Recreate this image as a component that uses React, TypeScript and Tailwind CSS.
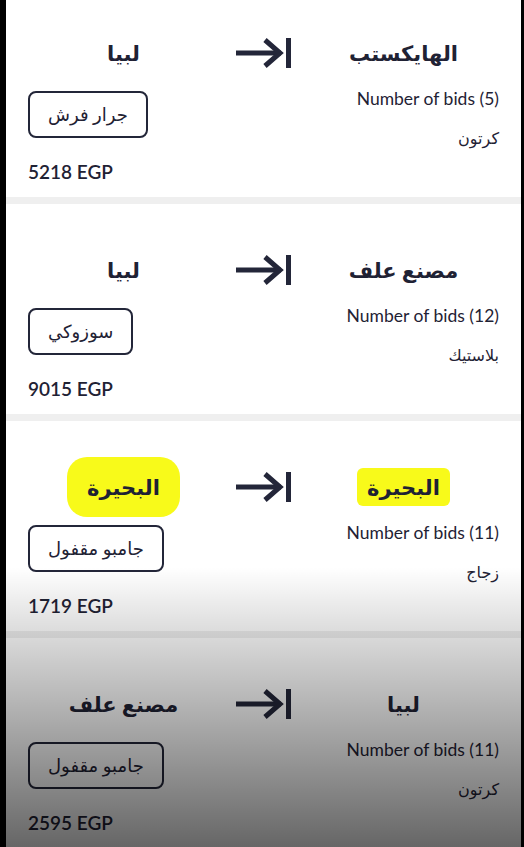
import React from 'react'

type Trip = {
  from: string
  to: string
  bids: number
  cargo: string
  vehicle: string
  price: number
  marked?: boolean
}

const trips: Trip[] = [
  { from: 'الهايكستب', to: 'لبيا', bids: 5, cargo: 'كرتون', vehicle: 'جرار فرش', price: 5218 },
  { from: 'مصنع علف', to: 'لبيا', bids: 12, cargo: 'بلاستيك', vehicle: 'سوزوكي', price: 9015 },
  { from: 'البحيرة', to: 'البحيرة', bids: 11, cargo: 'زجاج', vehicle: 'جامبو مقفول', price: 1719, marked: true },
  { from: 'لبيا', to: 'مصنع علف', bids: 11, cargo: 'كرتون', vehicle: 'جامبو مقفول', price: 2595 },
]

const ArrowIcon = () => (
  <svg width="56" height="32" viewBox="0 0 56 32" fill="none" stroke="#232639" strokeWidth="5">
    <path d="M0 16H45" />
    <path d="M29 3L44 16L29 29" />
    <path d="M52.5 1V31" />
  </svg>
)

const TripCard = ({ trip }: { trip: Trip }) => {
  return (
    <div className="bg-white h-[210px] pt-[50px]">
      {/* Route row */}
      <div className="flex justify-center items-center h-8">
        <div className="w-[140px] flex justify-center">
          {trip.marked ? (
            <span className="bg-[#f8fa1a] px-5 py-[14px] rounded-[20px] text-[21px] font-bold leading-8">{trip.to}</span>
          ) : (
            <span className="text-[21px] font-bold leading-8">{trip.to}</span>
          )}
        </div>
        <div className="w-[140px] flex justify-center">
          <ArrowIcon />
        </div>
        <div className="w-[140px] flex justify-center">
          {trip.marked ? (
            <span className="bg-[#f8fa1a] px-[10px] py-[3px] rounded-md text-[21px] font-bold leading-8">{trip.from}</span>
          ) : (
            <span className="text-[21px] font-bold leading-8">{trip.from}</span>
          )}
        </div>
      </div>

      {/* Details */}
      <div className="flex justify-between items-start px-[22px] mt-[18px]">
        <div className="flex flex-col items-start pt-1">
          <div className="h-[47px] px-[18px] flex items-center border-2 border-[#232639] rounded-lg text-[18px] font-medium">
            {trip.vehicle}
          </div>
          <div className="mt-[22px] text-[19px] font-semibold leading-6">{trip.price} EGP</div>
        </div>
        <div className="flex flex-col items-end">
          <div className="text-[17.5px] leading-6">Number of bids ({trip.bids})</div>
          <div className="mt-[15px] text-[16px] leading-6">{trip.cargo}</div>
        </div>
      </div>
    </div>
  )
}

const App = () => {
  return (
    <div className="relative h-[847px] overflow-hidden bg-black pl-[6px] pr-[3px] font-['Lato','DejaVu_Sans',sans-serif] text-[#1f2234]">
      <div className="h-full bg-[#efefef] overflow-hidden">
        <div className="flex flex-col gap-[7px] -mt-[13px]">
          {trips.map((t, i) => (
            <TripCard key={i} trip={t} />
          ))}
        </div>
      </div>

      {/* bottom fade overlay */}
      <div className="absolute left-[6px] right-[3px] bottom-0 h-[280px] bg-gradient-to-b from-transparent to-black/60 pointer-events-none" />
    </div>
  )
}

export default App
